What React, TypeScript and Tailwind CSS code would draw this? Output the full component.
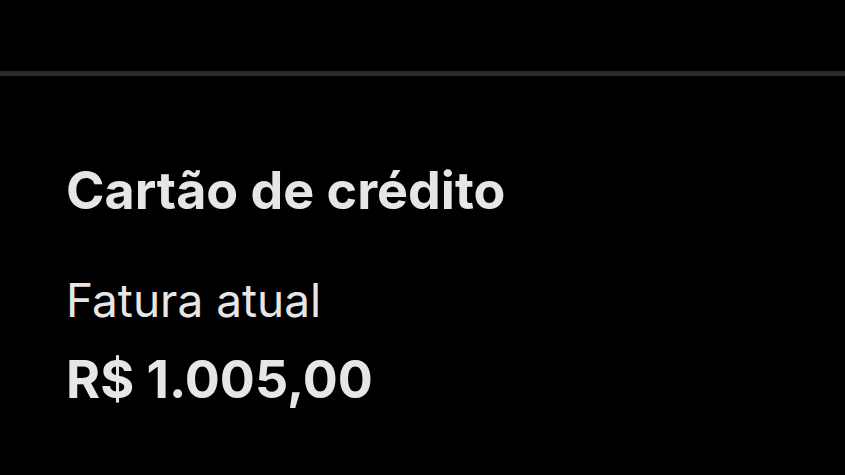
export default function App() {
  return (
    <div className="min-h-[475px] w-full bg-black font-['Inter','Liberation_Sans',sans-serif] text-[#e6e6e6]">
      {/* top divider */}
      <div className="pt-[71px]">
        <div className="h-[5px] w-full bg-[#2a2a2a]" />
      </div>

      <section className="px-[66px] pt-[89px]">
        <h2 className="text-[52px] font-bold leading-none">Cartão de crédito</h2>
        <p className="mt-[60px] text-[46px] leading-none">Fatura atual</p>
        <p className="mt-[31px] text-[52px] font-bold leading-none">R$ 1.005,00</p>
      </section>
    </div>
  );
}
